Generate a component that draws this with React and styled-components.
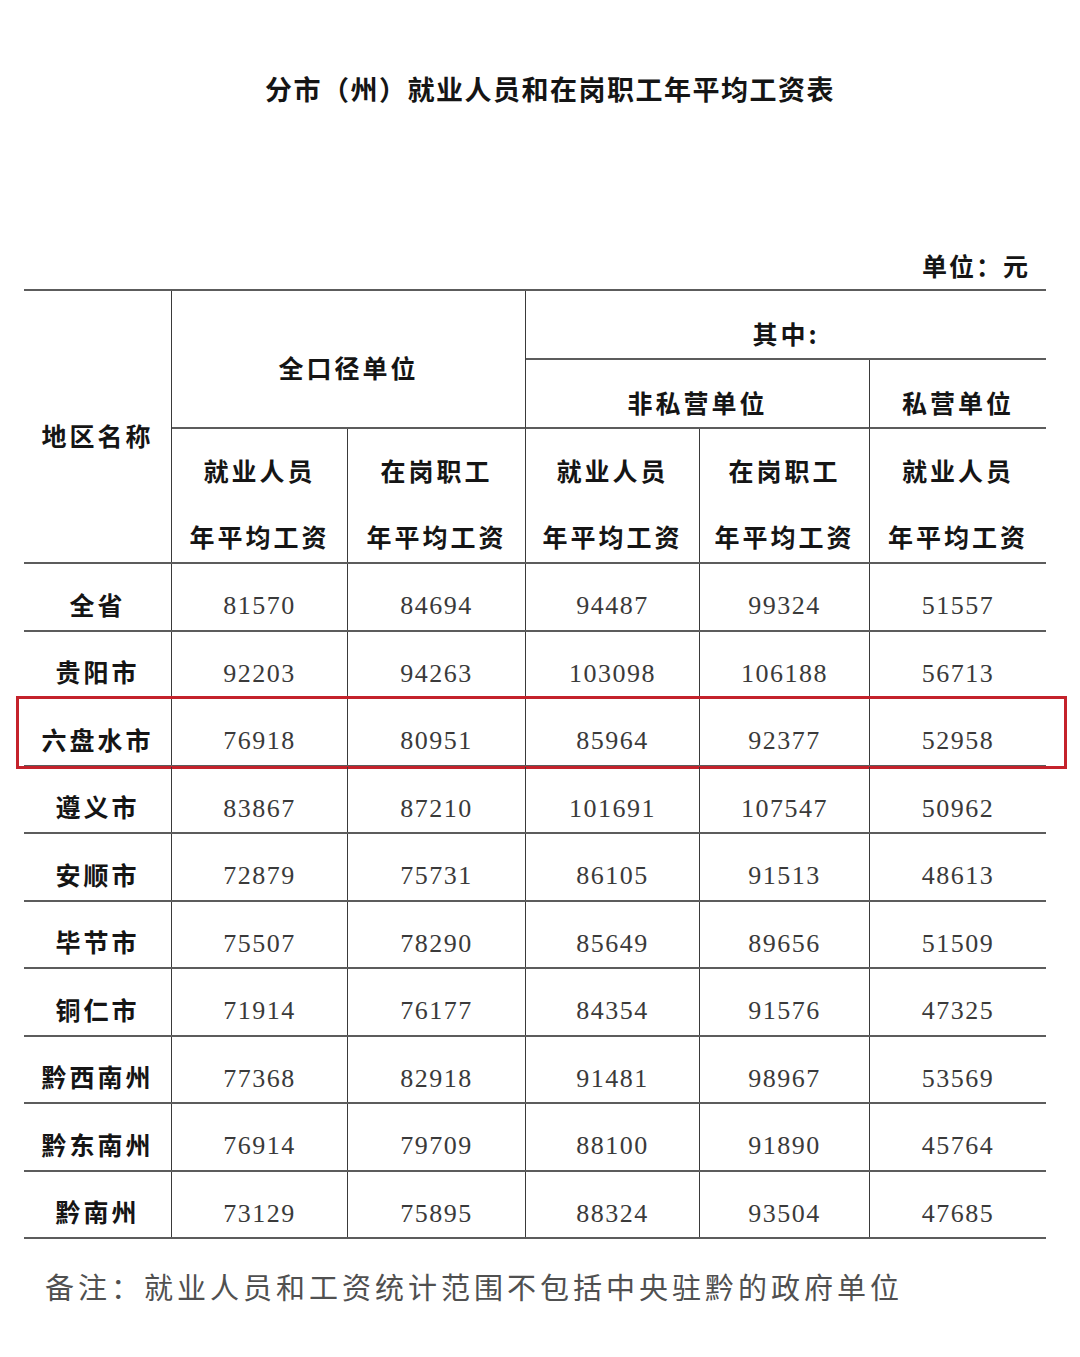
import React from "react";
import styled, { createGlobalStyle } from "styled-components";

const COLS = "148px 176px 178px 174px 170px 176px";

const rows = [
  { name: "全省", values: ["81570", "84694", "94487", "99324", "51557"] },
  { name: "贵阳市", values: ["92203", "94263", "103098", "106188", "56713"] },
  { name: "六盘水市", values: ["76918", "80951", "85964", "92377", "52958"], marked: true },
  { name: "遵义市", values: ["83867", "87210", "101691", "107547", "50962"] },
  { name: "安顺市", values: ["72879", "75731", "86105", "91513", "48613"] },
  { name: "毕节市", values: ["75507", "78290", "85649", "89656", "51509"] },
  { name: "铜仁市", values: ["71914", "76177", "84354", "91576", "47325"] },
  { name: "黔西南州", values: ["77368", "82918", "91481", "98967", "53569"] },
  { name: "黔东南州", values: ["76914", "79709", "88100", "91890", "45764"] },
  { name: "黔南州", values: ["73129", "75895", "88324", "93504", "47685"] },
];

const subHeaders = [
  ["就业人员", "年平均工资"],
  ["在岗职工", "年平均工资"],
  ["就业人员", "年平均工资"],
  ["在岗职工", "年平均工资"],
  ["就业人员", "年平均工资"],
];

export default function App() {
  return (
    <>
      <GlobalStyle />
      <Page>
        <Title>分市（州）就业人员和在岗职工年平均工资表</Title>
        <Unit>单位：元</Unit>

        <Table>
          <Header>
            <HeadCell $col="1" $row="1 / span 3" $right>
              地区名称
            </HeadCell>
            <HeadCell $col="2 / span 2" $row="1 / span 2" $right $bottom>
              全口径单位
            </HeadCell>
            <HeadCell $col="4 / span 3" $row="1" $bottom>
              其中:
            </HeadCell>
            <HeadCell $col="4 / span 2" $row="2" $right $bottom>
              非私营单位
            </HeadCell>
            <HeadCell $col="6" $row="2" $bottom>
              私营单位
            </HeadCell>
            {subHeaders.map((lines, i) => (
              <SubHead key={i} $col={String(i + 2)} $right={i < 4}>
                <span>{lines[0]}</span>
                <span>{lines[1]}</span>
              </SubHead>
            ))}
          </Header>

          {rows.map((row) => (
            <Row key={row.name} $marked={row.marked}>
              <NameCell>{row.name}</NameCell>
              {row.values.map((v, i) => (
                <NumCell key={i} $last={i === 4}>
                  {v}
                </NumCell>
              ))}
            </Row>
          ))}
        </Table>

        <Note>备注：就业人员和工资统计范围不包括中央驻黔的政府单位</Note>
      </Page>
    </>
  );
}

const GlobalStyle = createGlobalStyle`
  html, body {
    margin: 0;
    padding: 0;
    background: #ffffff;
  }
  body {
    font-family: "Noto Sans CJK SC", "Noto Sans", sans-serif;
    color: #111;
  }
`;

const Page = styled.div`
  width: 1080px;
  min-height: 1357px;
  box-sizing: border-box;
  padding: 69px 34px 0 24px;
`;

const Title = styled.h1`
  margin: 0 0 0 30px;
  height: 40px;
  line-height: 40px;
  text-align: center;
  font-size: 27px;
  font-weight: 700;
  letter-spacing: 1.5px;
  color: #151515;
`;

const Unit = styled.div`
  margin-top: 136px;
  padding-right: 16px;
  height: 40px;
  line-height: 40px;
  text-align: right;
  font-size: 25px;
  font-weight: 700;
  letter-spacing: 2px;
  color: #151515;
`;

const Table = styled.div`
  margin-top: 4px;
  width: 1022px;
  border-top: 2px solid #5c5c5c;
`;

const Header = styled.div`
  display: grid;
  grid-template-columns: ${COLS};
  grid-template-rows: 69px 69px 133px;
  border-bottom: 2px solid #5c5c5c;
`;

const HeadCell = styled.div`
  grid-column: ${(p) => p.$col};
  grid-row: ${(p) => p.$row};
  display: flex;
  align-items: center;
  justify-content: center;
  box-sizing: border-box;
  padding-top: 16px;
  font-size: 25px;
  font-weight: 700;
  letter-spacing: 3px;
  color: #151515;
  border-right: ${(p) => (p.$right ? "1px solid #3a3a3a" : "none")};
  border-bottom: ${(p) => (p.$bottom ? "2px solid #5c5c5c" : "none")};
`;

const SubHead = styled.div`
  grid-column: ${(p) => p.$col};
  grid-row: 3;
  display: flex;
  flex-direction: column;
  align-items: center;
  gap: 30px;
  padding-top: 23px;
  box-sizing: border-box;
  font-size: 25px;
  font-weight: 700;
  letter-spacing: 3px;
  line-height: 36px;
  color: #151515;
  border-right: ${(p) => (p.$right ? "1px solid #3a3a3a" : "none")};
`;

const Row = styled.div`
  position: relative;
  display: grid;
  grid-template-columns: ${COLS};
  height: 67.5px;
  box-sizing: border-box;
  border-bottom: 2px solid #5c5c5c;

  &::after {
    content: "";
    display: ${(p) => (p.$marked ? "block" : "none")};
    position: absolute;
    left: -8px;
    right: -21px;
    top: -3px;
    bottom: -4px;
    border: 3px solid #c4222b;
    pointer-events: none;
  }
`;

const NameCell = styled.div`
  display: flex;
  align-items: center;
  justify-content: center;
  padding-top: 14px;
  box-sizing: border-box;
  border-right: 1px solid #3a3a3a;
  font-size: 25px;
  font-weight: 700;
  letter-spacing: 3px;
  color: #151515;
`;

const NumCell = styled.div`
  display: flex;
  align-items: center;
  justify-content: center;
  padding-top: 19px;
  box-sizing: border-box;
  border-right: ${(p) => (p.$last ? "none" : "1px solid #3a3a3a")};
  font-family: "Liberation Serif", "Times New Roman", serif;
  font-size: 26px;
  letter-spacing: 1.5px;
  color: #3a3a3a;
`;

const Note = styled.div`
  margin-top: 25px;
  padding-left: 21px;
  height: 44px;
  line-height: 44px;
  font-size: 29px;
  font-weight: 400;
  letter-spacing: 4px;
  color: #505050;
  white-space: nowrap;
`;
